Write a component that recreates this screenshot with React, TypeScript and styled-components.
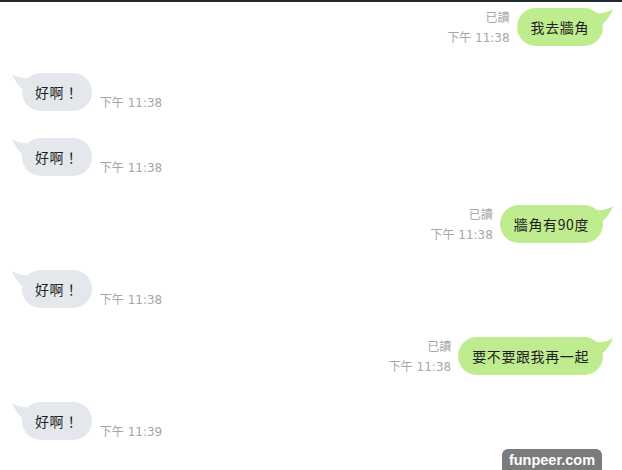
import React from "react";
import styled, { createGlobalStyle } from "styled-components";

const GlobalStyle = createGlobalStyle`
  html, body {
    margin: 0;
    padding: 0;
    background: #ffffff;
  }
  body {
    font-family: "Noto Sans CJK TC", "Noto Sans", sans-serif;
  }
`;

const Page = styled.div`
  border-top: 2px solid #1f2a30;
  padding: 6px 19px 0 22px;
  display: flex;
  flex-direction: column;
`;

const Row = styled.div<{ $mine: boolean }>`
  display: flex;
  flex-direction: ${(p) => (p.$mine ? "row-reverse" : "row")};
  align-items: flex-end;
  gap: ${(p) => (p.$mine ? "7px" : "8px")};
  margin-bottom: 27px;
  margin-top: ${(p) => (p.$mine ? "2px" : "0")};
  &:first-child {
    margin-top: 0;
  }
`;

const Bubble = styled.div<{ $mine: boolean }>`
  position: relative;
  height: 38px;
  padding: 0 ${(p) => (p.$mine ? "14px" : "13px")};
  border-radius: 19px;
  display: flex;
  align-items: center;
  font-size: 14px;
  letter-spacing: 0.6px;
  color: #1e1e1e;
  white-space: nowrap;
  background: ${(p) => (p.$mine ? "#bfec8e" : "#e4e7eb")};
`;

const Tail = styled.svg<{ $mine: boolean }>`
  position: absolute;
  top: -1px;
  width: 24px;
  height: 20px;
  ${(p) => (p.$mine ? "right: -12px;" : "left: -12px; transform: scaleX(-1);")}
`;

const Meta = styled.div<{ $mine: boolean }>`
  display: flex;
  flex-direction: column;
  align-items: ${(p) => (p.$mine ? "flex-end" : "flex-start")};
  gap: 4px;
  font-family: "DejaVu Sans", "Noto Sans CJK TC", sans-serif;
  font-size: 12px;
  line-height: 16px;
  color: #a6a6a6;
  white-space: nowrap;
`;

const Watermark = styled.div`
  position: fixed;
  right: 20px;
  bottom: 0;
  height: 21px;
  width: 100px;
  padding-top: 1px;
  box-sizing: border-box;
  border-radius: 6px 6px 0 0;
  background: #7b7b7b;
  color: #ffffff;
  font-family: "Liberation Sans", Arial, sans-serif;
  font-weight: bold;
  font-size: 14.5px;
  text-align: center;
  line-height: 20px;
`;

type Msg = { mine: boolean; text: string; time: string };

const messages: Msg[] = [
  { mine: true, text: "我去牆角", time: "下午 11:38" },
  { mine: false, text: "好啊！", time: "下午 11:38" },
  { mine: false, text: "好啊！", time: "下午 11:38" },
  { mine: true, text: "牆角有90度", time: "下午 11:38" },
  { mine: false, text: "好啊！", time: "下午 11:38" },
  { mine: true, text: "要不要跟我再一起", time: "下午 11:38" },
  { mine: false, text: "好啊！", time: "下午 11:39" },
];

const BubbleTail = ({ mine }: { mine: boolean }) => (
  <Tail $mine={mine} viewBox="0 0 24 20">
    <path
      d="M2 6 C9 7 16 6 22 2 C20 8 16 13 12 17 L2 17 Z"
      fill={mine ? "#bfec8e" : "#e4e7eb"}
    />
  </Tail>
);

export default function App() {
  return (
    <>
      <GlobalStyle />
      <Page>
        {messages.map((m, i) => (
          <Row key={i} $mine={m.mine}>
            <Bubble $mine={m.mine}>
              <BubbleTail mine={m.mine} />
              {m.text}
            </Bubble>
            <Meta $mine={m.mine}>
              {m.mine && <span>已讀</span>}
              <span>{m.time}</span>
            </Meta>
          </Row>
        ))}
      </Page>
      <Watermark>funpeer.com</Watermark>
    </>
  );
}
